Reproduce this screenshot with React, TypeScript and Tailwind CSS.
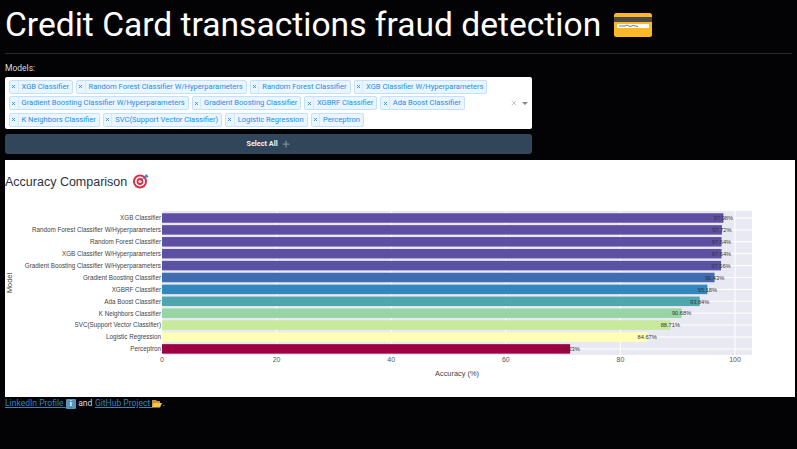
import { Plus, X } from 'lucide-react';

const models = [
  'XGB Classifier',
  'Random Forest Classifier W/Hyperparameters',
  'Random Forest Classifier',
  'XGB Classifier W/Hyperparameters',
  'Gradient Boosting Classifier W/Hyperparameters',
  'Gradient Boosting Classifier',
  'XGBRF Classifier',
  'Ada Boost Classifier',
  'K Neighbors Classifier',
  'SVC(Support Vector Classifier)',
  'Logistic Regression',
  'Perceptron',
];

const results = [
  { name: 'XGB Classifier', value: 97.98, color: '#5e4fa2' },
  { name: 'Random Forest Classifier W/Hyperparameters', value: 97.72, color: '#5e4fa2' },
  { name: 'Random Forest Classifier', value: 97.64, color: '#5d4fa2' },
  { name: 'XGB Classifier W/Hyperparameters', value: 97.64, color: '#5d4fa2' },
  { name: 'Gradient Boosting Classifier W/Hyperparameters', value: 97.56, color: '#5a53a4' },
  { name: 'Gradient Boosting Classifier', value: 96.43, color: '#416cb0' },
  { name: 'XGBRF Classifier', value: 95.18, color: '#3288bd' },
  { name: 'Ada Boost Classifier', value: 93.84, color: '#4fa6ad' },
  { name: 'K Neighbors Classifier', value: 90.68, color: '#98d5a4' },
  { name: 'SVC(Support Vector Classifier)', value: 88.71, color: '#c7e99b' },
  { name: 'Logistic Regression', value: 84.67, color: '#ffffb5' },
  { name: 'Perceptron', value: 71.23, color: '#9e0142' },
];

// chart geometry, in panel pixels
const X0 = 157;
const UNIT = 5.73;
const rowY = (i: number) => 58 + i * 11.9;

function CardEmoji() {
  return (
    <svg width="38" height="24" viewBox="0 0 38 24" className="ml-[13px] shrink-0">
      <rect width="38" height="24" rx="2.500" fill="#fdb827" />
      <rect y="4" width="38" height="5" fill="#4a4a48" />
      <rect x="3" y="11" width="32" height="4" fill="#fff" />
      <path d="M5 13h6l2-1 3 1.500 3-1 5 1" stroke="#555" strokeWidth="0.8" fill="none" />
    </svg>
  );
}

function TargetEmoji({ x, y }: { x: number; y: number }) {
  return (
    <g transform={`translate(${x} ${y})`}>
      <circle cx="7" cy="8" r="7" fill="#dd2e44" />
      <circle cx="7" cy="8" r="5" fill="#fff" />
      <circle cx="7" cy="8" r="3.400" fill="#dd2e44" />
      <circle cx="7" cy="8" r="1.600" fill="#fff" />
      <path d="M7 8l6-6" stroke="#3b6fa8" strokeWidth="1" />
      <path d="M11.500 2.500l2-2 .8 1.500 1.500.5-2 2z" fill="#3b88c3" />
    </g>
  );
}

function Chip({ label }: { label: string }) {
  return (
    <div className="flex h-[14px] items-stretch rounded-[2px] border border-[#c2e0ff] bg-[#ebf5ff] text-[#1a8fe8]">
      <span className="flex w-[8.500px] items-center justify-center border-r border-[#d6eaff]">
        <X size={5} strokeWidth={4} />
      </span>
      <span className="px-[3px] text-[7.550px] leading-[12px]">{label}</span>
    </div>
  );
}

function AccuracyChart() {
  return (
    <svg width="790" height="237" viewBox="0 0 790 237" className="block font-['Liberation_Sans',sans-serif]">
      <text x="0" y="26" fontSize="12.500" fill="#2a3342">Accuracy Comparison</text>
      <TargetEmoji x={128} y={13.500} />

      <rect x={X0} y="51" width="590" height="144" fill="#e9e9f3" />
      {results.map((r, i) => (
        <line key={r.name} x1={X0} x2="747" y1={rowY(i)} y2={rowY(i)} stroke="#fff" strokeWidth="1" />
      ))}
      {[0, 20, 40, 60, 80, 100].map((t) => (
        <g key={t}>
          <line x1={X0 + t * UNIT} x2={X0 + t * UNIT} y1="51" y2="195" stroke="#fff" strokeWidth="1" />
          <text x={X0 + t * UNIT} y="202" fontSize="7" textAnchor="middle" fill="#555">{t}</text>
        </g>
      ))}

      {results.map((r, i) => (
        <g key={r.name}>
          <rect x={X0} y={rowY(i) - 4.750} width={r.value * UNIT} height="9.500" fill={r.color} />
          <text x={X0 - 1} y={rowY(i) + 2.300} fontSize="6.300" textAnchor="end" fill="#444">{r.name}</text>
          <text x={X0 + r.value * UNIT} y={rowY(i) + 2.200} fontSize="5.700" textAnchor="middle" fill="#333">{r.value.toFixed(2)}%</text>
        </g>
      ))}

      <text x="452" y="215.500" fontSize="7.400" textAnchor="middle" fill="#444">Accuracy (%)</text>
      <text transform="translate(7 123) rotate(-90)" fontSize="7.400" textAnchor="middle" fill="#444">Model</text>
    </svg>
  );
}

export default function App() {
  return (
    <div className="h-[449px] w-[797px] overflow-hidden bg-[#030306] px-[5px] font-['Roboto',sans-serif] text-[#e8e8e8]">
      <div className="flex h-[54px] items-center border-b border-[#29292d] pb-[4px]">
        <h1 className="whitespace-nowrap text-[33.600px] font-normal leading-none text-white">
          Credit Card transactions fraud detection
        </h1>
        <CardEmoji />
      </div>

      <div className="mt-[8px] text-[8.500px] leading-[12px] text-[#dcdcdc]">Models:</div>

      <div className="mt-[3px] flex h-[52px] w-[527px] items-center rounded-[2px] bg-white pl-[4px] pr-[4px]">
        <div className="flex flex-1 flex-wrap gap-x-[3px] gap-y-[2.500px] pr-[10px]">
          {models.map((m) => (
            <Chip key={m} label={m} />
          ))}
        </div>
        <X size={8} strokeWidth={1.500} className="text-[#888]" />
        <span className="ml-[4px] h-0 w-0 border-x-[3px] border-t-[3px] border-x-transparent border-t-[#888]" />
      </div>

      <button className="mt-[5px] flex h-[20px] w-[527px] items-center justify-center rounded-[3px] bg-[#31465a] text-[7.300px] font-bold text-[#eef1f4]">
        Select All
        <Plus size={10} strokeWidth={3} className="ml-[3px] text-[#7d8a94]" />
      </button>

      <div className="mt-[6px] h-[237px] w-[790px] bg-white">
        <AccuracyChart />
      </div>

      <div className="flex items-center text-[8.550px] leading-[13px] text-[#dcdcdc]">
        <a className="flex items-center text-[#3186bd] underline">
          <span>LinkedIn Profile&nbsp;</span>
          <span className="inline-flex h-[10px] w-[10px] items-center justify-center rounded-[1px] bg-[#5a93b5] text-[8px] font-bold leading-none text-white">i</span>
        </a>
        <span className="mx-[2.500px]">and</span>
        <a className="flex items-center text-[#3186bd] underline">
          <span>GitHub Project&nbsp;</span>
          <svg width="10" height="9" viewBox="0 0 10 9">
            <path d="M0 1h4l1 1h3v6H0z" fill="#c8932f" />
            <path d="M1.500 4H10L8 8.500H0z" fill="#f6c550" />
          </svg>
        </a>
        <span>.</span>
      </div>
    </div>
  );
}
